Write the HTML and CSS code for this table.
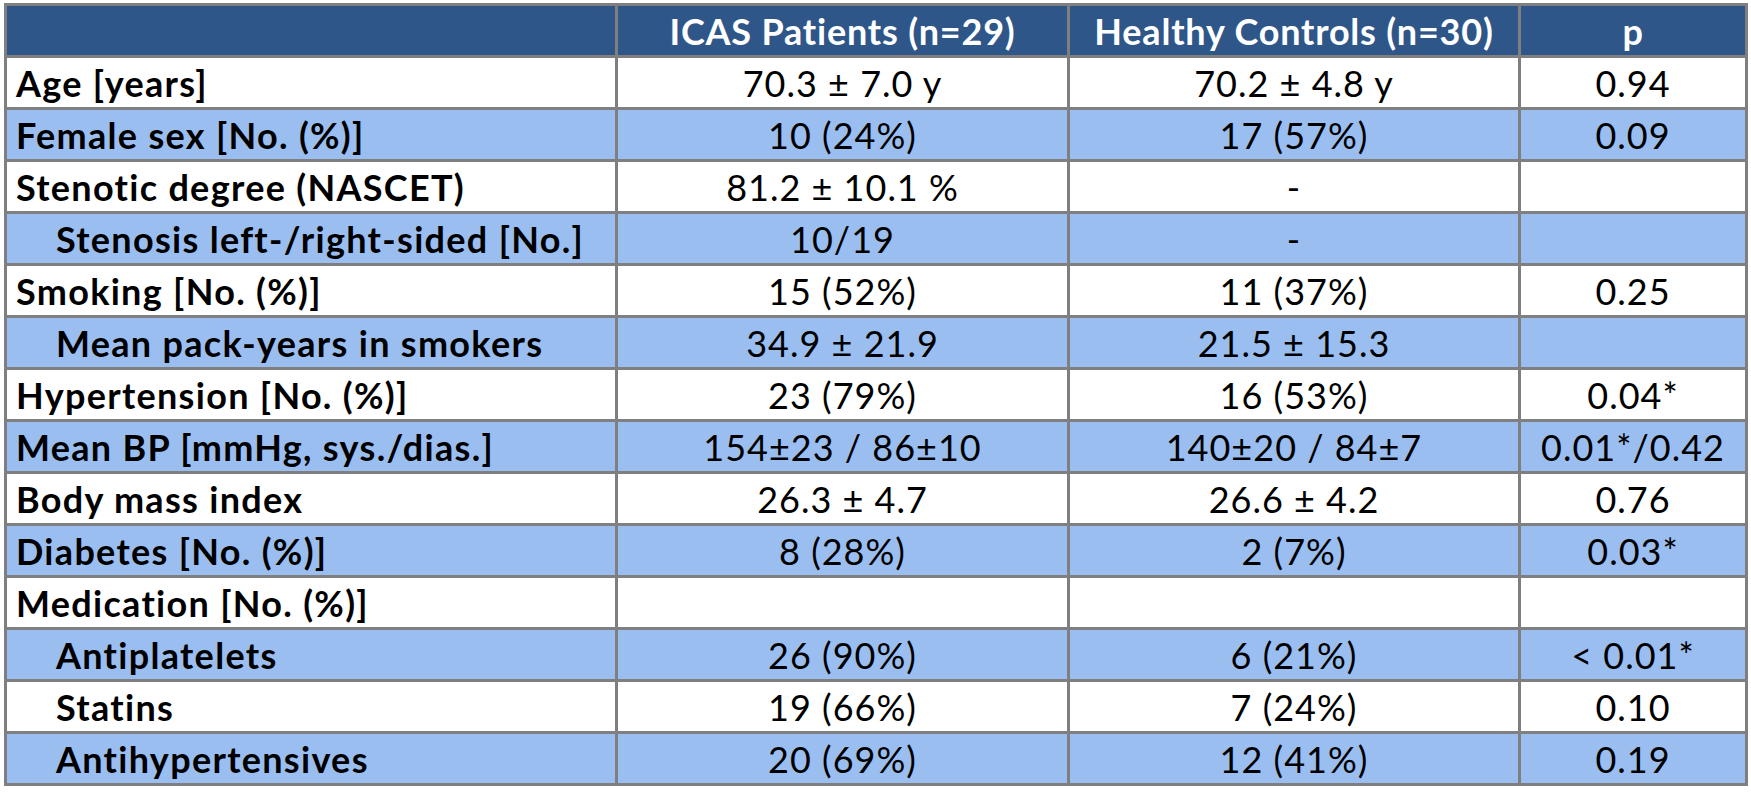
FILE: index.html
```html
<!DOCTYPE html>
<html lang="en">
<head>
<meta charset="utf-8">
<title>Patient characteristics</title>
<link rel="stylesheet" href="styles.css">
</head>
<body>
<div class="table">
  <div class="row head">
    <div class="cell"></div>
    <div class="cell">ICAS Patients (n=29)</div>
    <div class="cell">Healthy Controls (n=30)</div>
    <div class="cell">p</div>
  </div>
  <div class="row">
    <div class="cell lbl">Age [years]</div>
    <div class="cell">70.3 ± 7.0 y</div>
    <div class="cell">70.2 ± 4.8 y</div>
    <div class="cell">0.94</div>
  </div>
  <div class="row alt">
    <div class="cell lbl">Female sex [No. (%)]</div>
    <div class="cell">10 (24%)</div>
    <div class="cell">17 (57%)</div>
    <div class="cell">0.09</div>
  </div>
  <div class="row">
    <div class="cell lbl">Stenotic degree (NASCET)</div>
    <div class="cell">81.2 ± 10.1 %</div>
    <div class="cell">-</div>
    <div class="cell"></div>
  </div>
  <div class="row alt">
    <div class="cell lbl ind">Stenosis left-/right-sided [No.]</div>
    <div class="cell">10/19</div>
    <div class="cell">-</div>
    <div class="cell"></div>
  </div>
  <div class="row">
    <div class="cell lbl">Smoking [No. (%)]</div>
    <div class="cell">15 (52%)</div>
    <div class="cell">11 (37%)</div>
    <div class="cell">0.25</div>
  </div>
  <div class="row alt">
    <div class="cell lbl ind">Mean pack-years in smokers</div>
    <div class="cell">34.9 ± 21.9</div>
    <div class="cell">21.5 ± 15.3</div>
    <div class="cell"></div>
  </div>
  <div class="row">
    <div class="cell lbl">Hypertension [No. (%)]</div>
    <div class="cell">23 (79%)</div>
    <div class="cell">16 (53%)</div>
    <div class="cell">0.04*</div>
  </div>
  <div class="row alt">
    <div class="cell lbl">Mean BP [mmHg, sys./dias.]</div>
    <div class="cell">154±23 / 86±10</div>
    <div class="cell">140±20 / 84±7</div>
    <div class="cell">0.01*/0.42</div>
  </div>
  <div class="row">
    <div class="cell lbl">Body mass index</div>
    <div class="cell">26.3 ± 4.7</div>
    <div class="cell">26.6 ± 4.2</div>
    <div class="cell">0.76</div>
  </div>
  <div class="row alt">
    <div class="cell lbl">Diabetes [No. (%)]</div>
    <div class="cell">8 (28%)</div>
    <div class="cell">2 (7%)</div>
    <div class="cell">0.03*</div>
  </div>
  <div class="row">
    <div class="cell lbl">Medication [No. (%)]</div>
    <div class="cell"></div>
    <div class="cell"></div>
    <div class="cell"></div>
  </div>
  <div class="row alt">
    <div class="cell lbl ind">Antiplatelets</div>
    <div class="cell">26 (90%)</div>
    <div class="cell">6 (21%)</div>
    <div class="cell">&lt; 0.01*</div>
  </div>
  <div class="row">
    <div class="cell lbl ind">Statins</div>
    <div class="cell">19 (66%)</div>
    <div class="cell">7 (24%)</div>
    <div class="cell">0.10</div>
  </div>
  <div class="row alt">
    <div class="cell lbl ind">Antihypertensives</div>
    <div class="cell">20 (69%)</div>
    <div class="cell">12 (41%)</div>
    <div class="cell">0.19</div>
  </div>
</div>
</body>
</html>
```

FILE: styles.css
```css
html, body {
  margin: 0;
  padding: 0;
  background: #ffffff;
}

body {
  font-family: Lato, "Open Sans", "Liberation Sans", sans-serif;
  color: #000000;
}

.table {
  display: grid;
  grid-template-columns: 608px 449px 448px 224px;
  grid-auto-rows: 49px;
  gap: 3px;
  padding: 3px;
  margin: 3px 0 0 4px;
  width: max-content;
  background: #7f7f7f;
}

.row {
  display: contents;
}

.cell {
  display: flex;
  align-items: center;
  justify-content: center;
  background: #ffffff;
  font-size: 36px;
  letter-spacing: 1px;
  white-space: nowrap;
  overflow: hidden;
}

.row.alt .cell {
  background: #9bbef0;
}

.row.head .cell {
  background: #2f5689;
  color: #ffffff;
  font-weight: 700;
  letter-spacing: 0.8px;
}

.cell.lbl {
  justify-content: flex-start;
  padding-left: 9px;
  font-weight: 700;
  letter-spacing: 1.3px;
}

.cell.ind {
  padding-left: 49px;
}
```
